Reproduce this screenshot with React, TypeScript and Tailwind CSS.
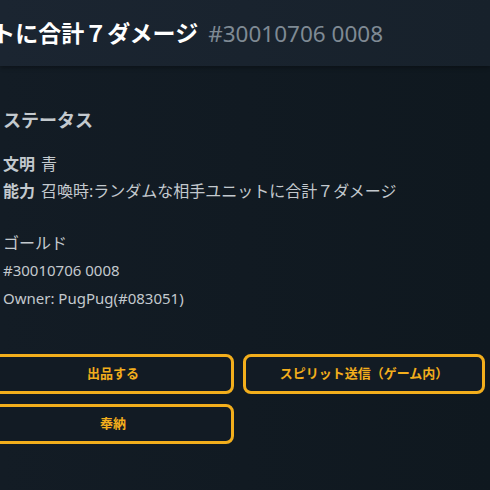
// カード詳細（スクロール位置の切り出し）
const jp = { fontFamily: '"Segoe UI", "Noto Sans", "Noto Sans CJK JP", sans-serif' };

function GoldButton({ label }: { label: string }) {
  return (
    <button className="h-[40px] rounded-[8px] border-[3px] border-[#f2ae1c] bg-[#121b24] text-[#f2ae1c] text-[13px] font-bold">
      {label}
    </button>
  );
}

export default function App() {
  return (
    <div className="w-[490px] h-[490px] overflow-hidden bg-gradient-to-r from-[#131c25] to-[#0f181f]" style={jp}>
      {/* ヘッダー */}
      <div className="h-[66px] overflow-hidden bg-gradient-to-r from-[#1b2531] to-[#17212b] shadow-[0_2px_4px_rgba(0,0,0,0.3)] flex items-center">
        <div className="w-[383px] shrink-0 flex justify-end items-baseline gap-[10px] whitespace-nowrap">
          <span className="text-white text-[23px] font-bold">召喚時:ランダムな相手ユニットに合計７ダメージ</span>
          <span className="text-[#7f8a94] text-[22.5px]">#30010706 0008</span>
        </div>
      </div>

      <div className="pl-[3px] pt-[40px] text-[#c3c9ce]">
        <h2 className="text-[18px] font-bold leading-[28px]">ステータス</h2>
        <div className="mt-[17px] text-[16px] leading-[27px]">
          <div><span className="font-bold mr-[6px]">文明</span>青</div>
          <div><span className="font-bold mr-[6px]">能力</span>召喚時:ランダムな相手ユニットに合計７ダメージ</div>
        </div>

        <div className="mt-[25px] text-[16px] leading-[26px]">ゴールド</div>
        <div className="text-[15px] leading-[28px]">#30010706 0008</div>
        <div className="text-[15px] leading-[28px]">Owner: PugPug(#083051)</div>
      </div>

      <div className="ml-[-8px] mt-[42px] w-[493px] grid grid-cols-2 gap-x-[9px] gap-y-[10px]">
        <GoldButton label="出品する" />
        <GoldButton label="スピリット送信（ゲーム内）" />
        <GoldButton label="奉納" />
      </div>
    </div>
  );
}
